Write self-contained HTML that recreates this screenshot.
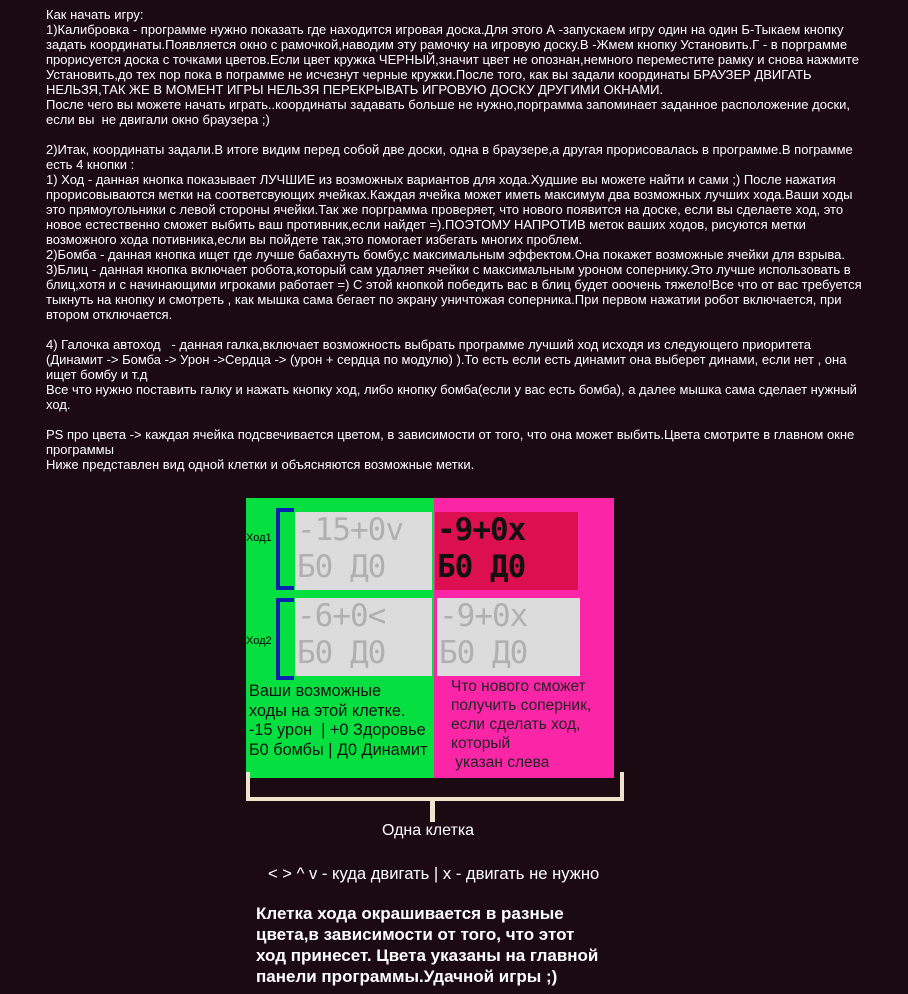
<!DOCTYPE html>
<html><head><meta charset="utf-8"><style>
html,body{margin:0;padding:0;background:#1b0a12;width:908px;height:994px;overflow:hidden}
body{position:relative;font-family:"Liberation Sans",Arial,sans-serif;color:#fff}
.t{position:absolute;left:46px;top:7px;font-size:13px;line-height:15px;white-space:nowrap}
.a{position:absolute}
.cell{position:absolute;background:#dcdcdc;color:#b0b0b0;font-family:"DejaVu Sans Mono","Liberation Mono",monospace;font-size:31px;line-height:37px;overflow:hidden;white-space:nowrap;padding-left:2px;letter-spacing:-1px}
</style></head><body>
<div class="t">Как начать игру:<br>
1)Калибровка - программе нужно показать где находится игровая доска.Для этого А -запускаем игру один на один Б-Тыкаем кнопку<br>
задать координаты.Появляется окно с рамочкой,наводим эту рамочку на игровую доску.В -Жмем кнопку Установить.Г - в порграмме<br>
прорисуется доска с точками цветов.Если цвет кружка ЧЕРНЫЙ,значит цвет не опознан,немного переместите рамку и снова нажмите<br>
Установить,до тех пор пока в пограмме не исчезнут черные кружки.После того, как вы задали координаты БРАУЗЕР ДВИГАТЬ<br>
НЕЛЬЗЯ,ТАК ЖЕ В МОМЕНТ ИГРЫ НЕЛЬЗЯ ПЕРЕКРЫВАТЬ ИГРОВУЮ ДОСКУ ДРУГИМИ ОКНАМИ.<br>
После чего вы можете начать играть..координаты задавать больше не нужно,порграмма запоминает заданное расположение доски,<br>
если вы&nbsp; не двигали окно браузера ;)<br>
<br>
2)Итак, координаты задали.В итоге видим перед собой две доски, одна в браузере,а другая прорисовалась в программе.В пограмме<br>
есть 4 кнопки :<br>
1) Ход - данная кнопка показывает ЛУЧШИЕ из возможных вариантов для хода.Худшие вы можете найти и сами ;) После нажатия<br>
прорисовываются метки на соответсвующих ячейках.Каждая ячейка может иметь максимум два возможных лучших хода.Ваши ходы<br>
это прямоугольники с левой стороны ячейки.Так же порграмма проверяет, что нового появится на доске, если вы сделаете ход, это<br>
новое естественно сможет выбить ваш противник,если найдет =).ПОЭТОМУ НАПРОТИВ меток ваших ходов, рисуются метки<br>
возможного хода потивника,если вы пойдете так,это помогает избегать многих проблем.<br>
2)Бомба - данная кнопка ищет где лучше бабахнуть бомбу,с максимальным эффектом.Она покажет возможные ячейки для взрыва.<br>
3)Блиц - данная кнопка включает робота,который сам удаляет ячейки с максимальным уроном сопернику.Это лучше использовать в<br>
блиц,хотя и с начинающими игроками работает =) С этой кнопкой победить вас в блиц будет ооочень тяжело!Все что от вас требуется<br>
тыкнуть на кнопку и смотреть , как мышка сама бегает по экрану уничтожая соперника.При первом нажатии робот включается, при<br>
втором отключается.<br>
<br>
4) Галочка автоход&nbsp;&nbsp; - данная галка,включает возможность выбрать программе лучший ход исходя из следующего приоритета<br>
(Динамит -&gt; Бомба -&gt; Урон -&gt;Сердца -&gt; (урон + сердца по модулю) ).То есть если есть динамит она выберет динами, если нет , она<br>
ищет бомбу и т.д<br>
Все что нужно поставить галку и нажать кнопку ход, либо кнопку бомба(если у вас есть бомба), а далее мышка сама сделает нужный<br>
ход.<br>
<br>
PS про цвета -&gt; каждая ячейка подсвечивается цветом, в зависимости от того, что она может выбить.Цвета смотрите в главном окне<br>
программы<br>
Ниже представлен вид одной клетки и объясняются возможные метки.</div>

<div class="a" style="left:246px;top:498px;width:188px;height:280px;background:#05e040"></div>
<div class="a" style="left:434px;top:498px;width:180px;height:280px;background:#fb25a8"></div>
<div class="cell" style="left:295px;top:512px;width:135px;height:78px">-15+0v<br>Б0 Д0</div>
<div class="cell" style="left:435px;top:512px;width:141px;height:78px;background:#dc1050;color:#111;font-weight:bold">-9+0x<br>Б0 Д0</div>
<div class="cell" style="left:295px;top:598px;width:135px;height:78px">-6+0&lt;<br>Б0 Д0</div>
<div class="cell" style="left:437px;top:598px;width:141px;height:78px">-9+0x<br>Б0 Д0</div>
<div class="a" style="left:276px;top:508px;width:18px;height:82px;border:4px solid #0a22b0;border-right:none;box-sizing:border-box"></div>
<div class="a" style="left:276px;top:598px;width:18px;height:82px;border:4px solid #0a22b0;border-right:none;box-sizing:border-box"></div>
<div class="a" style="left:246px;top:532px;font-size:11px;color:#000">Ход1</div>
<div class="a" style="left:246px;top:635px;font-size:11px;color:#000">Ход2</div>
<div class="a" style="left:249px;top:682px;font-size:16.3px;line-height:19.5px;color:#111;white-space:nowrap">Ваши возможные<br>ходы на этой клетке.<br>-15 урон&nbsp; | +0 Здоровье<br>Б0 бомбы | Д0 Динамит</div>
<div class="a" style="left:451px;top:677px;font-size:15.5px;line-height:19px;color:#222;white-space:nowrap">Что нового сможет<br>получить соперник,<br>если сделать ход,<br>который<br>&nbsp;указан слева</div>
<div class="a" style="left:246px;top:772px;width:378px;height:29px;border:4px solid #f0e2cc;border-top:none;box-sizing:border-box"></div>
<div class="a" style="left:430px;top:800px;width:5px;height:22px;background:#f0e2cc"></div>
<div class="a" style="left:382px;top:822px;font-size:16px">Одна клетка</div>
<div class="a" style="left:268px;top:864px;font-size:16.6px;white-space:nowrap">&lt; &gt; ^ v - куда двигать | x - двигать не нужно</div>
<div class="a" style="left:256px;top:903px;font-size:17px;line-height:21px;font-weight:bold;white-space:nowrap">Клетка хода окрашивается в разные<br>цвета,в зависимости от того, что этот<br>ход принесет. Цвета указаны на главной<br>панели программы.Удачной игры ;)</div>
</body></html>
